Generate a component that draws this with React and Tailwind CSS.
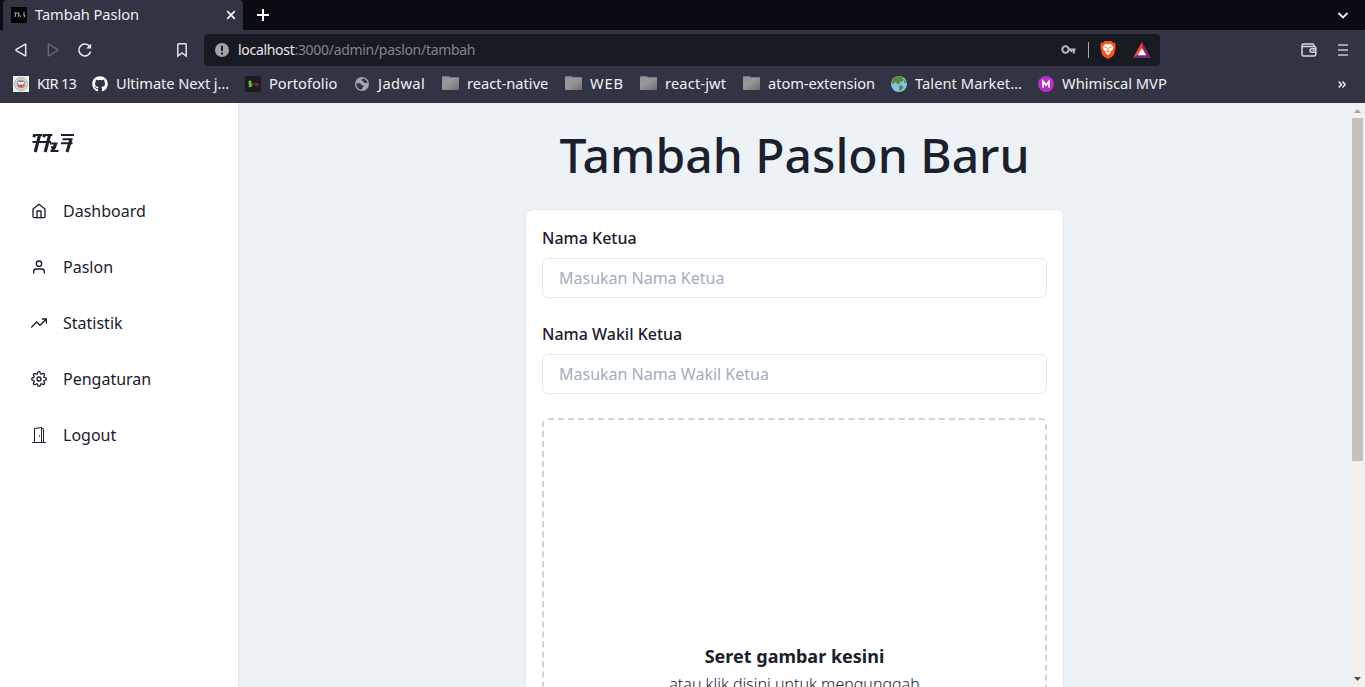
import React from "react";
import { FiHome, FiUser, FiTrendingUp, FiSettings } from "react-icons/fi";
import { BsDoorOpen } from "react-icons/bs";
import { FaGithub } from "react-icons/fa";

function Kir() {
  return (
    <svg className="size-4" viewBox="0 0 16 16">
      <rect width="16" height="16" fill="#f1f1ef" />
      <circle cx="8" cy="8" r="6.5" fill="#d9d9d6" stroke="#8f918f" strokeDasharray="1.5 .6" />
      <circle cx="8" cy="8" r="4" fill="#f4efed" stroke="#777" strokeWidth=".8" />
      <path d="M5 7.5l1.600 2 1.400-1.600 1.400 1.600 1.600-2v2.200L8 11.500l-3-1.800z" fill="#d3392f" />
      <path d="M6 5.500h4" stroke="#555" strokeWidth=".8" />
    </svg>
  );
}
function Terminal() {
  return (
    <svg className="size-4" viewBox="0 0 16 16">
      <rect width="16" height="16" fill="#1b1c1d" />
      <path d="M6.500 5.700H4.200v2.200h2v2.200H3.500M5.200 4.500v6.800" fill="none" stroke="#6fc845" strokeWidth="1.200" />
      <path d="M8 10V7.500h1.500M10.500 10V7.500h2.500V10M11.800 7.500V10" fill="none" stroke="#9a1c3f" strokeWidth="1.100" />
    </svg>
  );
}
function Globe() {
  return (
    <svg className="size-4" viewBox="0 0 16 16">
      <circle cx="8" cy="8" r="7" fill="#a4a7ae" />
      <path d="M2.300 7.300h3.500c1.300 0 1.200 1.900 2.600 1.900 1.200 0 1.400.5 1 1.400-.7 1-1.300 1.400-1.600 3C4.500 13.700 2.200 10.800 2.300 7.300zM9.500 2.400c-1.500.5-2.200.8-2 1.700.2.900 1.500.5 1.700 1.500.2 1.200 1 1.600 4.300 1.400C13.200 4.700 11.500 2.900 9.500 2.400z" fill="#343643" />
    </svg>
  );
}
function Folder() {
  return (
    <svg className="ml-[0.500px] h-4 w-[17px]" viewBox="0 0 17 16">
      <defs>
        <linearGradient id="fold" x1="0" y1="0" x2="1" y2="1">
          <stop offset="0" stopColor="#8f9096" />
          <stop offset=".45" stopColor="#98989c" />
          <stop offset="1" stopColor="#6f6f70" />
        </linearGradient>
      </defs>
      <path d="M0 1.500Q0 0 1.500 0H6.500Q7.500 0 7.500 1H16Q17 1 17 2V13Q17 14 16 14H1Q0 14 0 13z" fill="url(#fold)" />
      <path d="M.5 .500H7M7 1.500H16.500" stroke="#777980" />
    </svg>
  );
}
function Earth() {
  return (
    <svg className="size-4" viewBox="0 0 16 16">
      <circle cx="8" cy="8" r="8" fill="#86c2ee" />
      <path d="M1 4.500C3 1 6 .2 9 .2l3 1-.5 1.300 1.500 1-1.500 2-2.500.5L8 8.500l-2-1L4.500 6 2 8 .5 7zM8.500 9l3 1 1 1.500-2 2-1 2-1.500-2zM13.500 3.500l2 3-1 1-1.500-1.500z" fill="#568d33" />
    </svg>
  );
}
function Whim() {
  return (
    <svg className="size-4" viewBox="0 0 16 16">
      <circle cx="8" cy="8" r="8" fill="#b62fcb" />
      <path d="M5 11.500V5.500l3 3.500 3-3.500v6" fill="none" stroke="#fff" strokeWidth="1.800" />
    </svg>
  );
}

const bookmarks = [
  { icon: <Kir />, label: "KIR 13", box: "w-[79px]", text: "tracking-[-0.75px]" },
  { icon: <FaGithub className="size-4 text-white" />, label: "Ultimate Next j…", box: "w-[153px]", text: "tracking-[-0.07px]" },
  { icon: <Terminal />, label: "Portofolio", box: "w-[109px]", text: "" },
  { icon: <Globe />, label: "Jadwal", box: "w-[87px]", text: "tracking-[0.4px]" },
  { icon: <Folder />, label: "react-native", box: "w-[123px]", text: "pl-[2px]" },
  { icon: <Folder />, label: "WEB", box: "w-[75px]", text: "pl-[2px] tracking-[0.8px]" },
  { icon: <Folder />, label: "react-jwt", box: "w-[103px]", text: "pl-[2px] tracking-[0.15px]" },
  { icon: <Folder />, label: "atom-extension", box: "w-[149px]", text: "pl-[2px] tracking-[-0.06px]" },
  { icon: <Earth />, label: "Talent Market…", box: "w-[147px]", text: "tracking-[0.06px]" },
  { icon: <Whim />, label: "Whimiscal MVP", box: "w-[140px]", text: "" },
];

function TabStrip() {
  return (
    <div className="flex h-[30px] items-stretch bg-[#0b0b14] pl-[3px]">
      <div className="flex w-60 items-center rounded-t-[4px] bg-[#323443] pl-2 text-[14.67px] text-[#eceef2]">
        <svg className="size-4" viewBox="0 0 16 16">
          <rect width="16" height="16" fill="#000" />
          <path d="M3 6h3M5 6l-1 4M6.500 6h2M8 6l-1 4M8.500 8l1.500 2M12 6h2M12 8h2l-1 2.500" stroke="#c4c4c4" strokeWidth=".9" fill="none" />
        </svg>
        <span className="ml-2 flex-1 pb-[2px] tracking-[-0.07px] whitespace-nowrap">Tambah Paslon</span>
        <svg className="mr-[7px] size-[10px]" viewBox="0 0 10 10">
          <path d="M1.200 1.200l7.600 7.600M8.800 1.200L1.200 8.800" stroke="#fff" strokeWidth="1.700" />
        </svg>
      </div>
      <div className="flex flex-1 items-center justify-between pr-4 pl-[14px]">
        <svg className="size-3" viewBox="0 0 12 12">
          <path d="M6 0v12M0 6h12" stroke="#fff" strokeWidth="2" />
        </svg>
        <svg className="h-[7px] w-[12px]" viewBox="0 0 12 7">
          <path d="M1.500 1l4.500 4.500L10.500 1" fill="none" stroke="#f1f1f3" strokeWidth="1.800" />
        </svg>
      </div>
    </div>
  );
}

function Toolbar() {
  return (
    <div className="flex h-10 items-center pl-[15px]">
      <svg className="h-4 w-3" viewBox="0 0 12 16">
        <path d="M10.700 2.300v11.400Q10.500 14 10 13.700L1.300 8.600Q.7 8 1.300 7.400L10 2.300Q10.500 2 10.700 2.300z" fill="none" stroke="#e3e4e8" strokeWidth="1.500" />
      </svg>
      <svg className="ml-5 h-4 w-3" viewBox="0 0 12 16">
        <path d="M1.300 2.300v11.400Q1.500 14 2 13.700L10.700 8.600Q11.300 8 10.700 7.400L2 2.300Q1.500 2 1.300 2.300z" fill="none" stroke="#6c6e7b" strokeWidth="1.300" />
      </svg>
      <svg className="ml-[18px] size-4" viewBox="0 0 16 16">
        <path d="M12.600 4.200A6 6 0 1 0 13.700 9.500" fill="none" stroke="#e8e9ed" strokeWidth="1.600" />
        <path d="M14.200 1.500v5H9.200z" fill="#e8e9ed" />
      </svg>
      <svg className="ml-[84px] h-4 w-[10px]" viewBox="0 0 10 16">
        <path d="M.8 2.500Q.8 1.700 1.600 1.700H8.400Q9.200 1.700 9.200 2.500V14L5 11 .8 14z" fill="none" stroke="#e3e4e8" strokeWidth="1.500" />
      </svg>
      <div className="ml-[17px] flex h-8 w-[956px] items-center rounded-[4px] bg-[#181a21] pl-[11px] text-[14px] text-[#82858c]">
        <svg className="size-[14px]" viewBox="0 0 14 14">
          <circle cx="7" cy="7" r="7" fill="#a0a3ab" />
          <path d="M7 2.800v5.200M7 9.500v1.900" stroke="#181a21" strokeWidth="1.900" />
        </svg>
        <span className="ml-[9px] flex-1 pb-[2px] tracking-[-0.3px] whitespace-nowrap"><span className="text-[#e9eaed]">localhost</span>:3000/admin/paslon/tambah</span>
        <svg className="h-[10px] w-[15px]" viewBox="0 0 15 10">
          <circle cx="4.500" cy="4.500" r="3.200" fill="none" stroke="#b9bbbf" strokeWidth="2" />
          <path d="M8 4.500h6.500M12.800 4.500v4M10.300 4.500v2.500" stroke="#b9bbbf" strokeWidth="2" />
        </svg>
        <div className="ml-[12px] h-4 w-px bg-[#a7a8ac]" />
        <svg className="ml-[11px] h-[18px] w-4" viewBox="0 0 16 18">
          <path d="M4.500 0h7l1.500 1.700 1.500-.2 1.300 2-.5 1.500.4 1.500-1.800 7-1.500 2L8 18l-4.400-2.500-1.500-2L.3 6.500.7 5 .2 3.500l1.300-2 1.500.2z" fill="#fb5213" />
          <path d="M5.500 2.800L8 3.300l2.500-.5L13.500 6l-1 3-2 1.500.3 1L8 14.300 5.200 11.500l.3-1-2-1.500-1-3z" fill="#fff" />
          <path d="M4.500 6l2.200.8M11.500 6l-2.200.8M8 6.500v3.200M6.300 10L8 11l1.700-1" stroke="#fb5213" strokeWidth=".9" fill="none" />
        </svg>
        <svg className="mr-[9px] ml-[17px] h-[16px] w-[18px]" viewBox="0 0 18 16">
          <path d="M9 0L0 16l5-3 4-7z" fill="#ff4724" />
          <path d="M9 0l9 16-5-3-4-7z" fill="#9e1f63" />
          <path d="M0 16h18l-5-3H5z" fill="#662d91" />
          <path d="M9 6l4.300 7.200H4.700z" fill="#fff" />
        </svg>
      </div>
      <svg className="ml-[141px] h-[14px] w-4" viewBox="0 0 16 14">
        <path d="M1 3v8.500Q1 13 2.500 13H13Q14.800 13 14.800 11.500V5Q14.800 3.500 13 3.500H1.500M1 3Q1 1 2.500 1H11.500Q13 1 13 3M15 5.700H11Q9 5.700 9 7.500 9 9.200 11 9.200H15" fill="none" stroke="#d8d9de" strokeWidth="1.500" />
        <path d="M11.500 7.500h2" stroke="#d8d9de" />
      </svg>
      <svg className="ml-[21px] h-3 w-[10px]" viewBox="0 0 10 12">
        <path d="M0 1h10M0 6h10M0 11h10" stroke="#c4c5ca" strokeWidth="1.700" />
      </svg>
    </div>
  );
}

function Bookmarks() {
  return (
    <div className="flex h-[33px] items-start pt-[3px] pl-[13px] text-[14.67px] text-[#f0f1f4]">
      {bookmarks.map((b) => (
        <div key={b.label} className={"flex h-[22px] shrink-0 items-center " + b.box}>
          <span className="w-6 shrink-0">{b.icon}</span>
          <span className={"pb-[2px] whitespace-nowrap " + b.text}>{b.label}</span>
        </div>
      ))}
      <svg className="mt-2 ml-auto mr-[19px] h-[7px] w-2 shrink-0" viewBox="0 0 8 7">
        <path d="M.7.500l2.700 3-2.700 3M4.500.500l2.700 3-2.700 3" fill="none" stroke="#f3f3f5" strokeWidth="1.500" />
      </svg>
    </div>
  );
}

const menu = [
  { Icon: FiHome, label: "Dashboard" },
  { Icon: FiUser, label: "Paslon" },
  { Icon: FiTrendingUp, label: "Statistik" },
  { Icon: FiSettings, label: "Pengaturan" },
  { Icon: BsDoorOpen, label: "Logout" },
];

function Sidebar() {
  return (
    <aside className="w-[239px] shrink-0 border-r border-[#e2e8f0] bg-white">
      <div className="flex h-20 items-center pl-8">
        <svg className="h-5 w-[42px]" viewBox="0 0 42 20">
          <g fill="none" stroke="#1a202c">
            <path d="M1 2h9M10.800 2h9.500M.5 9h18.500M29 2h13M30.500 6.300h10M29 10.300h11.500M18 10.500h7.500M19 14.300h5M18.500 18h8" strokeWidth="2" />
            <path d="M7.600 2L3.200 19M17.600 2L13.200 19M39 6L35 19M23.800 11l-3.500 7M2.800 1.500L1.700 4.200M12.600 1.500l-1.100 2.700" strokeWidth="3.100" />
          </g>
        </svg>
      </div>
      <nav>
        {menu.map(({ Icon, label }) => (
          <a key={label} className="flex h-14 items-center gap-4 pl-[31px]">
            <Icon className="size-4" />
            <span>{label}</span>
          </a>
        ))}
      </nav>
    </aside>
  );
}

function Field({ label, placeholder }) {
  return (
    <div className="mb-6">
      <label className="mb-2 block font-medium">{label}</label>
      <input className="block h-10 w-full rounded-md border border-[#e2e8f0] px-4 placeholder:text-[#a0aec0]" placeholder={placeholder} />
    </div>
  );
}

export default function App() {
  return (
    <div className="flex h-[687px] w-[1365px] flex-col overflow-hidden font-['Noto_Sans',sans-serif] text-[#1a202c]">
      <header className="h-[103px] shrink-0 bg-[#323443]">
        <TabStrip />
        <Toolbar />
        <Bookmarks />
      </header>
      <div className="flex min-h-0 flex-1">
        <Sidebar />
        <main className="flex min-w-0 flex-1 flex-col items-center overflow-hidden bg-[#edf2f7] pt-[23px]">
          <h1 className="shrink-0 text-5xl leading-[58px] font-medium">Tambah Paslon Baru</h1>
          <section className="mt-[25px] w-[539px] shrink-0 rounded-lg border border-[#e2e8f0] bg-white px-4 pt-4">
            <Field label="Nama Ketua" placeholder="Masukan Nama Ketua" />
            <Field label="Nama Wakil Ketua" placeholder="Masukan Nama Wakil Ketua" />
            <div className="flex h-[506px] flex-col items-center rounded-md border-2 border-dashed border-[#cbd5e0] pt-[225px]">
              <p className="text-lg leading-[22px] font-bold">Seret gambar kesini</p>
              <p className="mt-[5px] leading-6 font-light">atau klik disini untuk mengunggah</p>
            </div>
          </section>
        </main>
        <div className="flex w-[15px] shrink-0 flex-col items-center bg-[#f1f1f1]">
          <svg className="h-[15px] w-[15px] shrink-0" viewBox="0 0 15 15">
            <path d="M4 10h7L7.500 6z" fill="#a3a3a3" />
          </svg>
          <div className="h-[343px] w-[11px] bg-[#c1c1c1]" />
          <svg className="mt-auto size-[15px] shrink-0" viewBox="0 0 15 15">
            <path d="M4 5h7L7.500 9z" fill="#505050" />
          </svg>
        </div>
      </div>
    </div>
  );
}
